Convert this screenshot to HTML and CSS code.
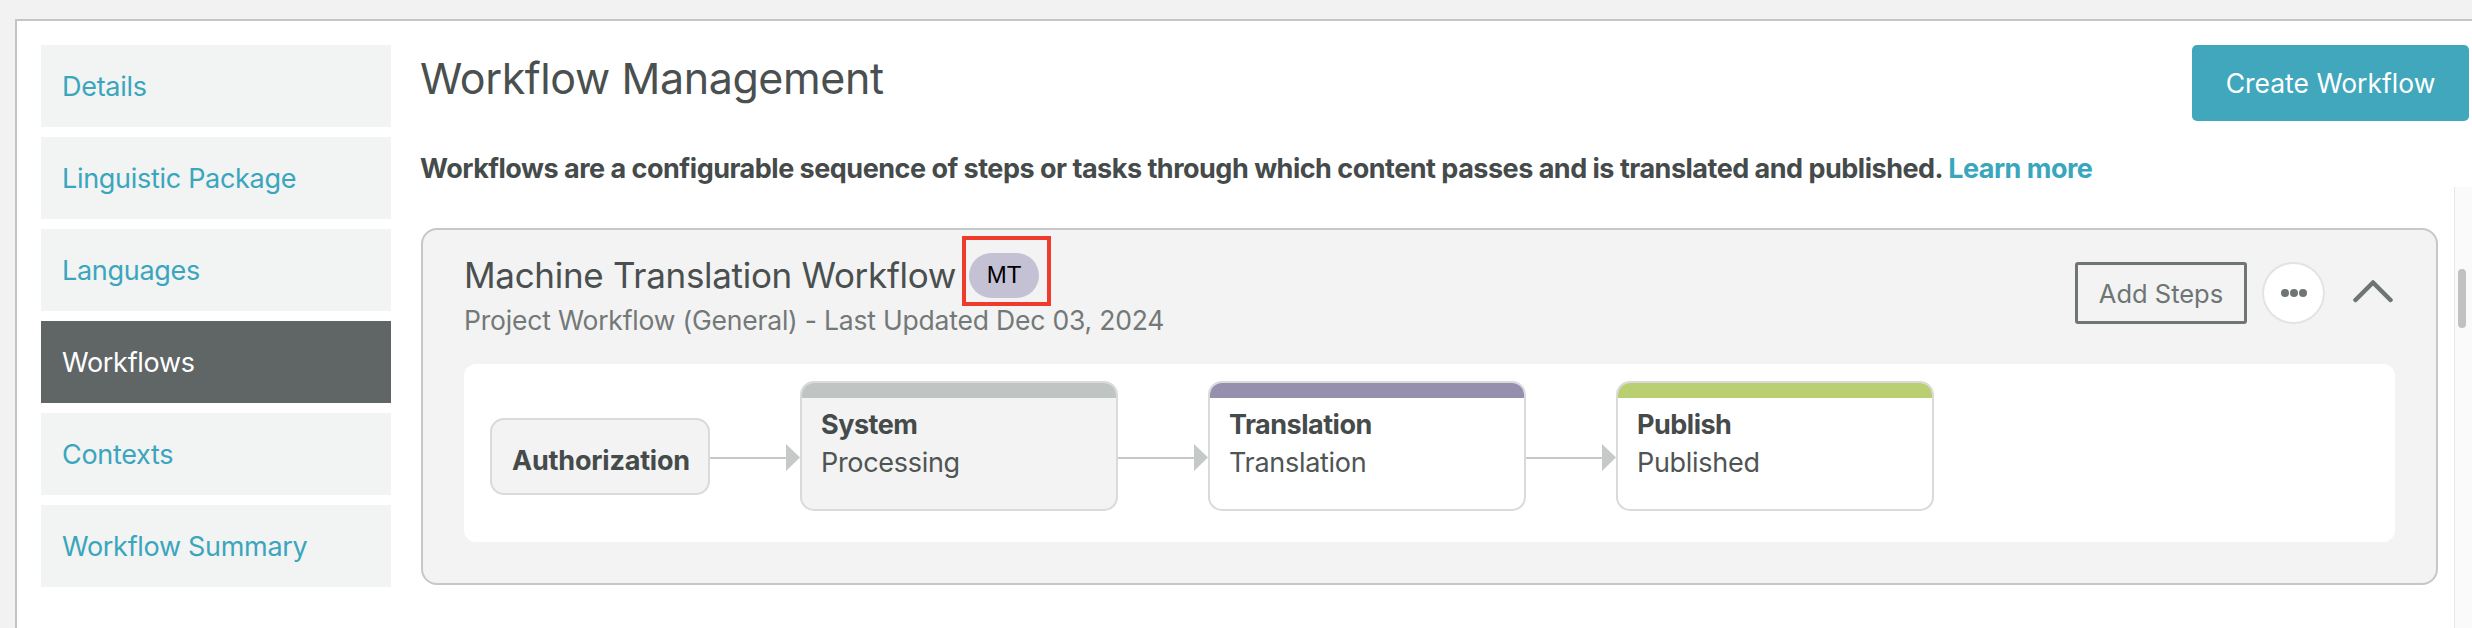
FILE: index.html
```html
<!DOCTYPE html>
<html lang="en">
<head>
<meta charset="utf-8">
<title>Workflow Management</title>
<link rel="stylesheet" href="styles.css">
</head>
<body>
<div class="frame">
  <nav class="sidebar">
    <a class="nav-item">Details</a>
    <a class="nav-item">Linguistic Package</a>
    <a class="nav-item">Languages</a>
    <a class="nav-item active">Workflows</a>
    <a class="nav-item">Contexts</a>
    <a class="nav-item">Workflow Summary</a>
  </nav>
  <main class="main">
    <div class="page-head">
      <h1 class="title">Workflow Management</h1>
      <button class="btn-primary">Create Workflow</button>
    </div>
    <p class="desc">Workflows are a configurable sequence of steps or tasks through which content passes and is translated and published. <a class="link">Learn more</a></p>
    <div class="scroll-area">
      <div class="scroll-content">
        <section class="card">
          <div class="card-head">
            <div class="card-info">
              <div class="card-title-row">
                <h2 class="card-title">Machine Translation Workflow</h2>
                <span class="badge">MT<span class="highlight"></span></span>
              </div>
              <div class="card-sub">Project Workflow (General) - Last Updated Dec 03, 2024</div>
            </div>
            <div class="card-actions">
              <button class="btn-outline">Add Steps</button>
              <button class="btn-more" aria-label="More">
                <svg width="26" height="8" viewBox="0 0 26 8"><circle cx="4" cy="4" r="4"/><circle cx="13" cy="4" r="4"/><circle cx="22" cy="4" r="4"/></svg>
              </button>
              <svg class="chevron" width="40" height="24" viewBox="0 0 40 24"><polyline points="2.5,21 20,3.5 37.5,21"/></svg>
            </div>
          </div>
          <div class="flow">
            <div class="step step-simple">Authorization</div>
            <div class="arrow"><span class="arrow-line"></span><svg class="arrow-head" width="14" height="27" viewBox="0 0 14 27"><polygon points="0,0 14,13.5 0,27"/></svg></div>
            <div class="step step-box step-gray">
              <div class="step-bar bar-gray"></div>
              <div class="step-body"><div class="step-name">System</div><div class="step-type">Processing</div></div>
            </div>
            <div class="arrow"><span class="arrow-line"></span><svg class="arrow-head" width="14" height="27" viewBox="0 0 14 27"><polygon points="0,0 14,13.5 0,27"/></svg></div>
            <div class="step step-box">
              <div class="step-bar bar-purple"></div>
              <div class="step-body"><div class="step-name">Translation</div><div class="step-type">Translation</div></div>
            </div>
            <div class="arrow"><span class="arrow-line"></span><svg class="arrow-head" width="14" height="27" viewBox="0 0 14 27"><polygon points="0,0 14,13.5 0,27"/></svg></div>
            <div class="step step-box">
              <div class="step-bar bar-green"></div>
              <div class="step-body"><div class="step-name">Publish</div><div class="step-type">Published</div></div>
            </div>
          </div>
        </section>
      </div>
      <div class="scrollbar"><div class="thumb"></div></div>
    </div>
  </main>
</div>
</body>
</html>
```

FILE: styles.css
```css
* { box-sizing: border-box; }
html, body { margin: 0; padding: 0; }
body {
  width: 2472px;
  height: 628px;
  overflow: hidden;
  background: #f2f2f2;
  font-family: "Inter", "Roboto", "Liberation Sans", sans-serif;
  color: #4a4f4f;
}
.frame {
  margin: 19px 0 0 15px;
  height: 609px;
  background: #ffffff;
  border-top: 2px solid #c3c6c5;
  border-left: 2px solid #c3c6c5;
  display: flex;
}
.sidebar {
  width: 374px;
  padding: 24px 0 0 24px;
  display: flex;
  flex-direction: column;
  gap: 10px;
  flex: none;
}
.nav-item {
  display: flex;
  align-items: center;
  height: 82px;
  padding-left: 21px;
  background: #f2f3f3;
  color: #3aa6bd;
  font-size: 27px;
  letter-spacing: -0.3px;
}
.nav-item.active {
  background: #606565;
  color: #ffffff;
}
.main {
  margin-left: 29px;
  flex: 1;
  display: flex;
  flex-direction: column;
  padding-top: 24px;
  min-width: 0;
}
.page-head {
  display: flex;
  justify-content: space-between;
  align-items: flex-start;
  padding-right: 3px;
}
.title {
  margin: 0;
  font-size: 43px;
  line-height: 66px;
  font-weight: 400;
  color: #4a4f4f;
  letter-spacing: -0.4px;
}
.btn-primary {
  width: 277px;
  height: 76px;
  border: none;
  border-radius: 5px;
  background: #40a7bd;
  color: #ffffff;
  font-family: inherit;
  font-size: 26.5px;
  padding: 0;
}
.desc {
  margin: 30px 0 0 0;
  font-size: 27px;
  line-height: 36px;
  font-weight: 700;
  color: #454a4a;
  letter-spacing: -0.5px;
  white-space: nowrap;
}
.link { color: #3aa6bd; }
.scroll-area {
  flex: 1;
  display: flex;
  min-height: 0;
}
.scroll-content {
  flex: 1;
  padding: 41px 16px 0 1px;
}
.scrollbar {
  width: 18px;
  flex: none;
  background: #fafafa;
  border-left: 1px solid #e6e6e6;
  padding: 82px 0 0 3px;
}
.thumb {
  width: 8px;
  height: 59px;
  border-radius: 4px;
  background: #c1c1c1;
}
.card {
  background: #f2f3f2;
  border: 2px solid #c4c8c7;
  border-radius: 16px;
  padding: 22px 41px 41px 41px;
}
.card-head {
  display: flex;
  justify-content: space-between;
  align-items: flex-start;
}
.card-title-row {
  display: flex;
  align-items: center;
  gap: 13px;
  height: 46px;
}
.card-title {
  margin: 0;
  font-size: 35px;
  line-height: 46px;
  font-weight: 400;
  color: #4a4f4f;
  letter-spacing: -0.3px;
}
.badge {
  position: relative;
  display: inline-flex;
  align-items: center;
  justify-content: center;
  width: 70px;
  height: 45px;
  border-radius: 23px;
  background: #c5c1d5;
  color: #000000;
  font-family: "Liberation Sans", Arial, sans-serif;
  font-size: 24px;
}
.highlight {
  position: absolute;
  left: -7px;
  right: -12px;
  top: -17px;
  bottom: -8px;
  border: 4px solid #ef3b2b;
}
.card-sub {
  font-size: 26.5px;
  line-height: 45px;
  color: #737878;
  letter-spacing: -0.2px;
}
.card-actions {
  display: flex;
  align-items: center;
  margin-top: 10px;
  margin-right: 2px;
}
.btn-outline {
  width: 172px;
  height: 62px;
  border: 3px solid #6f7474;
  border-radius: 3px;
  background: transparent;
  color: #6f7474;
  font-family: inherit;
  font-size: 25.5px;
  padding: 0;
}
.btn-more {
  margin-left: 15px;
  width: 63px;
  height: 62px;
  border-radius: 50%;
  border: 2px solid #e2e4e3;
  background: #ffffff;
  display: flex;
  align-items: center;
  justify-content: center;
  padding: 0;
}
.btn-more svg { fill: #6f7474; }
.chevron {
  margin-left: 28px;
  margin-bottom: 4px;
  fill: none;
  stroke: #6f7474;
  stroke-width: 4.5;
  stroke-linecap: round;
  stroke-linejoin: round;
}
.flow {
  margin-top: 21px;
  height: 178px;
  background: #ffffff;
  border-radius: 12px;
  padding: 17px 26px;
  display: flex;
  align-items: flex-start;
}
.step {
  border: 2px solid #d8dbda;
  border-radius: 14px;
  font-size: 27px;
  flex: none;
}
.step-simple {
  margin-top: 37px;
  width: 220px;
  height: 77px;
  background: #f2f3f2;
  display: flex;
  align-items: center;
  padding: 7px 0 0 20px;
  font-weight: 700;
  color: #454a4a;
  letter-spacing: -0.2px;
}
.step-box {
  width: 318px;
  height: 130px;
  background: #ffffff;
  overflow: hidden;
}
.step-gray { background: #f2f3f2; }
.step-bar { height: 15px; }
.bar-gray { background: #c0c5c4; }
.bar-purple { background: #968fae; }
.bar-green { background: #b9cf72; }
.step-body {
  padding: 8px 0 0 19px;
}
.step-name {
  font-weight: 700;
  color: #454a4a;
  line-height: 38px;
  letter-spacing: -0.5px;
}
.step-type {
  color: #4f5454;
  line-height: 38px;
  letter-spacing: -0.3px;
}
.arrow {
  width: 90px;
  flex: none;
  margin-top: 63px;
  height: 27px;
  display: flex;
  align-items: center;
}
.arrow-line {
  flex: 1;
  height: 2px;
  background: #c5c9c8;
}
.arrow-head { fill: #c5c9c8; flex: none; }
```
